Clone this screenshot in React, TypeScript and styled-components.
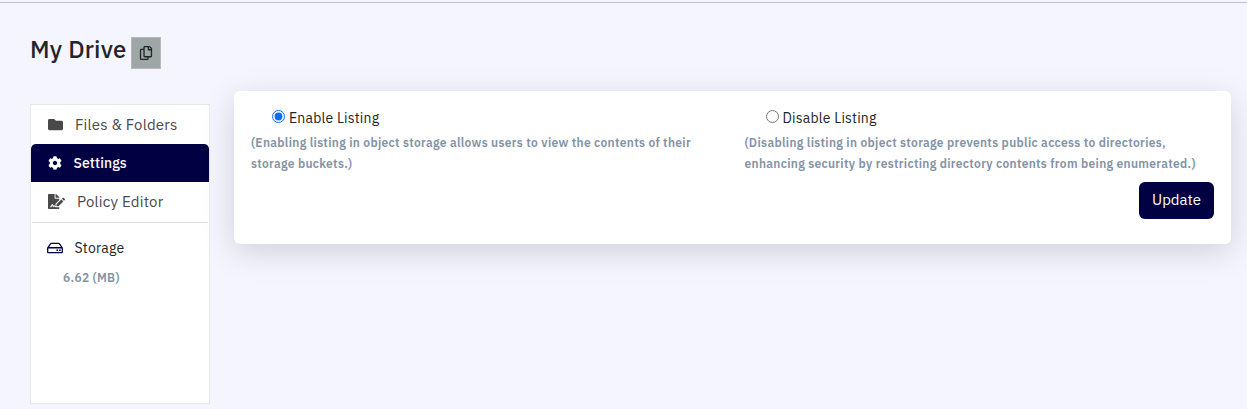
import React from "react";
import styled, { createGlobalStyle } from "styled-components";
import { FaCog, FaFileSignature, FaFolder, FaRegCopy, FaRegHdd } from "react-icons/fa";

const GlobalStyle = createGlobalStyle`
  * { box-sizing: border-box; }
  body {
    margin: 0;
    background: #f4f5fe;
    color: #212529;
    font-family: "IBM Plex Sans", Roboto, sans-serif;
    overflow: hidden;
  }
`;

const Page = styled.div`
  height: 409px;
  padding-top: 2px;
  overflow: hidden;
`;

const TopRule = styled.div`
  height: 1px;
  background: #c0c1c6;
`;

const Header = styled.header`
  display: flex;
  align-items: flex-start;
  height: 88px;
  padding: 31px 0 0 30px;
`;

const Title = styled.h1`
  margin: 0;
  width: 101px;
  font-size: 24px;
  font-weight: 500;
  line-height: 30px;
  letter-spacing: 0.2px;
  white-space: nowrap;
`;

const CopyButton = styled.button`
  display: flex;
  align-items: center;
  justify-content: center;
  width: 30px;
  height: 32px;
  margin-top: 3px;
  padding: 0;
  border: 1px solid #b5bbb9;
  background: #9ea7a5;
  color: #212529;
  font-size: 14px;
`;

const Layout = styled.div`
  display: flex;
  align-items: flex-start;
`;

const Sidebar = styled.nav`
  width: 180px;
  height: 300px;
  margin: 13px 0 0 30px;
  border: 1px solid #e7e8eb;
  background: #fff;
`;

const NavItem = styled.a<{ $active?: boolean; $gap: number }>`
  display: flex;
  align-items: center;
  gap: ${(p) => p.$gap}px;
  height: ${(p) => (p.$active ? 38 : 39)}px;
  padding-left: 17px;
  border-radius: ${(p) => (p.$active ? "5px 5px 0 0" : "0")};
  background: ${(p) => (p.$active ? "#010042" : "transparent")};
  color: ${(p) => (p.$active ? "#fff" : "#494949")};
  white-space: nowrap;
`;

const NavLabel = styled.span<{ $size: number; $weight?: number; $tracking: number }>`
  font-size: ${(p) => p.$size}px;
  font-weight: ${(p) => p.$weight ?? 400};
  letter-spacing: ${(p) => p.$tracking}px;
`;

const StorageSection = styled.section`
  margin: 1px 1px 0;
  padding: 15px 0 0 15px;
  border-top: 1px solid #dcddde;
`;

const StorageHeading = styled.div`
  display: flex;
  align-items: center;
  gap: 11.5px;
  height: 20px;
  color: #010042;
  span { color: #212529; font-size: 14px; line-height: 19px; letter-spacing: 0.2px; }
`;

const StorageSize = styled.div`
  margin: 10px 0 0 16px;
  color: #8392a5;
  font-size: 12px;
  font-weight: 600;
  line-height: 20px;
  letter-spacing: 0.32px;
`;

const Card = styled.main`
  width: 997px;
  height: 153px;
  margin-left: 24px;
  padding: 16px 17px 0;
  border-radius: 6px;
  background: #fff;
  box-shadow: 0 8px 32px rgba(0, 0, 0, 0.15);
`;

const Options = styled.div`
  display: grid;
  grid-template-columns: 493.5px 1fr;
`;

const RadioLabel = styled.label`
  display: flex;
  align-items: center;
  gap: 4px;
  height: 22px;
  padding-left: 21px;
  font-size: 14px;
  letter-spacing: 0.2px;
  input { width: 13px; height: 13px; margin: 0 0 3px; accent-color: #0d6efd; }
`;

const Hint = styled.p`
  margin: 3px 0 0;
  color: #8392a5;
  font-size: 12px;
  font-weight: 600;
  line-height: 21px;
  letter-spacing: 0.32px;
  white-space: nowrap;
`;

const Actions = styled.div`
  display: flex;
  justify-content: flex-end;
  margin-top: 8px;
`;

const UpdateButton = styled.button`
  width: 75px;
  height: 37px;
  padding: 0 0 2px;
  border: 0;
  border-radius: 6px;
  background: #010042;
  color: #fff;
  font-family: inherit;
  font-size: 15px;
`;

export default function App() {
  return (
    <Page>
      <GlobalStyle />
      <TopRule />
      <Header>
        <Title>My Drive</Title>
        <CopyButton aria-label="Copy"><FaRegCopy /></CopyButton>
      </Header>
      <Layout>
        <Sidebar>
          <NavItem $gap={12}>
            <FaFolder size={15} />
            <NavLabel $size={15} $tracking={0.2}>Files &amp; Folders</NavLabel>
          </NavItem>
          <NavItem $active $gap={11.5}>
            <FaCog size={14} />
            <NavLabel $size={14} $weight={500} $tracking={0.1}>Settings</NavLabel>
          </NavItem>
          <NavItem $gap={12}>
            <FaFileSignature size={17} />
            <NavLabel $size={15} $tracking={0.2}>Policy Editor</NavLabel>
          </NavItem>
          <StorageSection>
            <StorageHeading><FaRegHdd size={16} /><span>Storage</span></StorageHeading>
            <StorageSize>6.62 (MB)</StorageSize>
          </StorageSection>
        </Sidebar>
        <Card>
          <Options>
            <div>
              <RadioLabel><input type="radio" name="listing" defaultChecked />Enable Listing</RadioLabel>
              <Hint>
                (Enabling listing in object storage allows users to view the contents of their<br />
                storage buckets.)
              </Hint>
            </div>
            <div>
              <RadioLabel><input type="radio" name="listing" />Disable Listing</RadioLabel>
              <Hint>
                (Disabling listing in object storage prevents public access to directories,<br />
                enhancing security by restricting directory contents from being enumerated.)
              </Hint>
            </div>
          </Options>
          <Actions><UpdateButton>Update</UpdateButton></Actions>
        </Card>
      </Layout>
    </Page>
  );
}
